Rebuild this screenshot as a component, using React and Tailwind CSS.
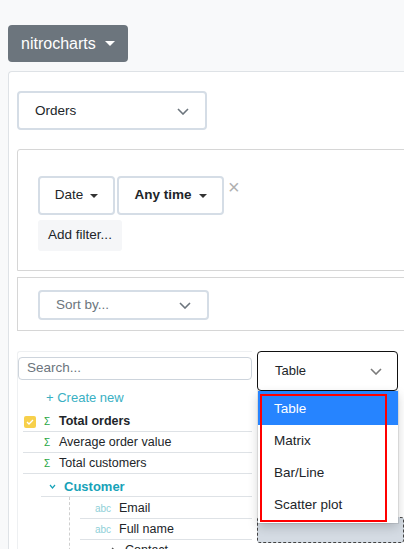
import React from 'react';

const Caret = ({ className = '' }) => (
  <svg width="8" height="4" viewBox="0 0 8 4" className={className}>
    <path d="M0 0 L8 0 L4 4 Z" fill="currentColor" />
  </svg>
);

const Chevron = ({ className = '' }) => (
  <svg width="12" height="7" viewBox="0 0 12 7" className={className}>
    <polyline points="1,1 6,6 11,1" fill="none" stroke="currentColor" strokeWidth="1.6" />
  </svg>
);

const Sigma = () => <span className="text-[10px] text-[#28a745] leading-none">Σ</span>;
const Abc = () => <span className="text-[10px] text-[#8fd0d8] leading-none">abc</span>;

const App = () => {
  const font = { fontFamily: '"Liberation Sans", Arial, sans-serif' };

  return (
    <div className="w-[404px] h-[549px] overflow-hidden bg-[#f8f9fa] pt-[25px] pl-[8px] text-[#212529]" style={font}>
      <button className="flex items-center h-[37px] w-[120px] pl-[13px] bg-[#6c757d] rounded-[4px] text-white text-[16px]">
        nitrocharts
        <svg width="10" height="5" viewBox="0 0 10 5" className="ml-[9px]">
          <path d="M0 0 L10 0 L5 5 Z" fill="currentColor" />
        </svg>
      </button>

      <div className="mt-[9px] w-[420px] h-[600px] bg-white border-l border-t border-[#dee2e6] rounded-tl-[4px] pl-[8px] pt-[19px]">
        <div className="flex items-center justify-between w-[190px] h-[39px] pt-[1px] border-2 border-[#d5dde6] rounded-[4px] pl-[16px] pr-[16px] text-[13.5px]">
          <span>Orders</span>
          <Chevron className="text-[#6c757d]" />
        </div>

        <div className="mt-[19px] w-[420px] h-[122px] border border-[#d6d6d6] rounded-tl-[3px] pl-[20px] pt-[26px]">
          <div className="flex items-start">
            <div className="flex items-center justify-center gap-[7px] w-[77px] h-[39px] border-2 border-[#d5dde6] rounded-[4px] text-[13.5px]">
              Date
              <Caret className="text-[#333]" />
            </div>
            <div className="ml-[2px] flex items-center justify-center gap-[7px] w-[107px] h-[39px] border-2 border-[#d5dde6] rounded-[4px] text-[13.5px] font-bold">
              Any time
              <Caret className="text-[#333]" />
            </div>
            <span className="ml-[4px] mt-[1px] text-[20px] leading-[20px] text-[#b0b0b0]">×</span>
          </div>
          <div className="mt-[5px] flex items-center justify-center w-[84px] h-[31px] bg-[#f5f6f8] rounded-[3px] text-[13.5px]">
            Add filter...
          </div>
        </div>

        <div className="mt-[6px] w-[420px] h-[54px] border border-[#d6d6d6] pl-[20px] pt-[12px]">
          <div className="flex items-center justify-between w-[171px] h-[30px] border-2 border-[#d5dde6] rounded-[4px] pl-[16px] pr-[16px] text-[13.5px] text-[#6c757d]">
            <span>Sort by...</span>
            <Chevron className="text-[#6c757d]" />
          </div>
        </div>

        <div className="mt-[20px] flex items-start">
          <div className="w-[235px] h-[200px] border-l border-t border-[#eef0f2] rounded-tl-[3px] pt-[5px]">
            <div className="flex items-center w-[234px] h-[23px] border border-[#cdd4dc] rounded-[4px] pl-[8px] text-[13.5px] text-[#6c757d]">
              Search...
            </div>
            <div className="h-[31px] pt-[4px] pl-[28px] flex items-center text-[13px] text-[#3ab0c3]">
              + Create new
            </div>
            <div className="ml-[5px] w-[229px] text-[12.5px]">
              <div className="flex items-center h-[21px] pt-[1px] border-b border-[#dee2e6] pl-[1px]">
                <span className="flex items-center justify-center w-[12px] h-[12px] bg-[#f7d04b] rounded-[2px]">
                  <svg width="8" height="6" viewBox="0 0 8 6">
                    <polyline points="1,3 3,5 7,1" fill="none" stroke="white" strokeWidth="1.3" />
                  </svg>
                </span>
                <span className="ml-[8px] w-[15px]"><Sigma /></span>
                <span className="font-bold">Total orders</span>
              </div>
              <div className="flex items-center h-[21px] border-b border-[#dee2e6] pl-[21px]">
                <span className="w-[15px]"><Sigma /></span>
                <span>Average order value</span>
              </div>
              <div className="flex items-center h-[21px] border-b border-[#dee2e6] pl-[21px]">
                <span className="w-[15px]"><Sigma /></span>
                <span>Total customers</span>
              </div>
              <div className="ml-[18px]">
                <div className="flex items-center h-[23px] pt-[3px] border-b border-[#dee2e6] pl-[8px]">
                  <svg width="7" height="5" viewBox="0 0 7 5" className="text-[#17a2b8]">
                    <polyline points="1,1 3.5,4 6,1" fill="none" stroke="currentColor" strokeWidth="1.2" />
                  </svg>
                  <span className="ml-[8px] font-bold text-[13px] text-[#17a2b8]">Customer</span>
                </div>
                <div className="ml-[28px] border-l border-dashed border-[#cfcfcf] pt-[1px]">
                  <div className="ml-[10px] flex items-center h-[21px] border-b border-[#dee2e6] pl-[15px]">
                    <span className="w-[24px]"><Abc /></span>
                    <span>Email</span>
                  </div>
                  <div className="ml-[10px] flex items-center h-[21px] border-b border-[#dee2e6] pl-[15px]">
                    <span className="w-[24px]"><Abc /></span>
                    <span>Full name</span>
                  </div>
                  <div className="ml-[10px] flex items-center h-[21px] pl-[31px]">
                    <svg width="5" height="7" viewBox="0 0 5 7" className="text-[#555]">
                      <polyline points="1,1 4,3.5 1,6" fill="none" stroke="currentColor" strokeWidth="1.2" />
                    </svg>
                    <span className="ml-[9px]">Contact</span>
                  </div>
                </div>
              </div>
            </div>
          </div>

          <div className="ml-[5px] w-[150px]">
            <div className="relative w-[141px]">
              <div className="flex items-center justify-between h-[40px] border border-[#111] rounded-[4px] pl-[17px] pr-[15px] text-[13px]">
                <span>Table</span>
                <Chevron className="text-[#7a7a7a]" />
              </div>
              <div className="absolute z-10 top-full left-[1px] w-[140px] bg-white pb-[2px] shadow-[0_0_0_1px_rgba(0,0,0,0.08),0_4px_10px_rgba(0,0,0,0.18)] text-[13.5px]">
                <div className="flex items-center h-[34px] pt-[2px] pl-[16px] bg-[#2684ff] text-white">Table</div>
                <div className="flex items-center h-[32px] pl-[16px]">Matrix</div>
                <div className="flex items-center h-[32px] pl-[16px]">Bar/Line</div>
                <div className="flex items-center h-[32px] pl-[16px]">Scatter plot</div>
                <div className="absolute left-[2px] top-[3px] w-[127px] h-[128px] border-2 border-[#ff0000]" />
              </div>
            </div>
            <div className="mt-[126px] w-[147px] h-[26px] bg-[#d4dbe3] border border-dashed border-[#444] rounded-[3px]" />
          </div>
        </div>
      </div>
    </div>
  );
};

export default App;
